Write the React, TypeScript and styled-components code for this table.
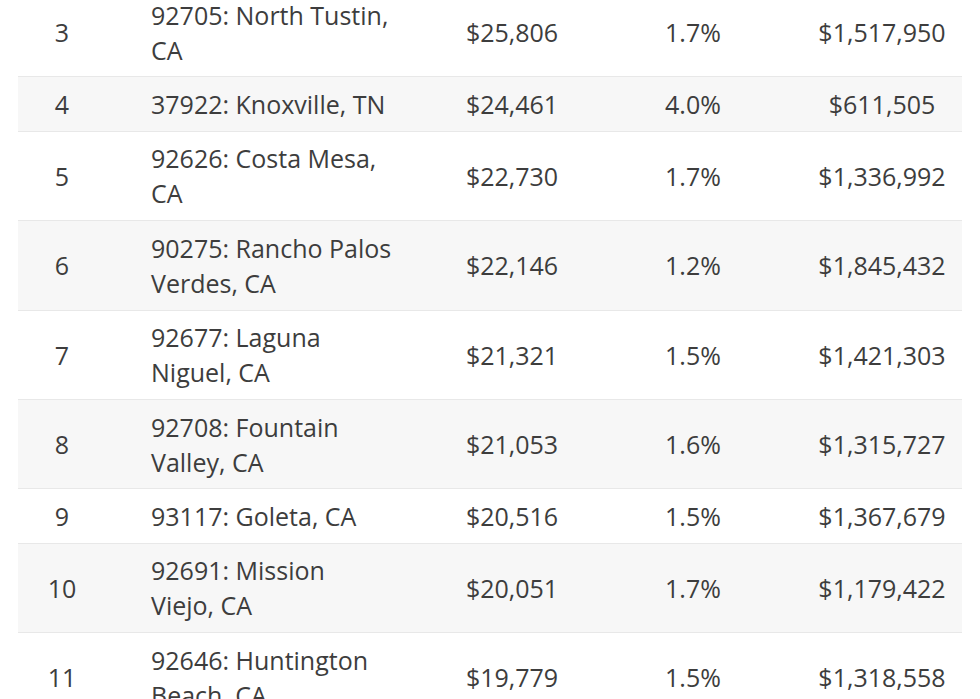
import React from "react";
import styled, { createGlobalStyle } from "styled-components";

const GlobalStyle = createGlobalStyle`
  html, body {
    margin: 0;
    padding: 0;
    background: #ffffff;
  }
  body {
    font-family: "Open Sans", "Noto Sans", sans-serif;
    color: #3d3d3d;
    overflow: hidden;
  }
`;

const Viewport = styled.div`
  width: 980px;
  height: 699px;
  overflow: hidden;
  padding: 0 18px;
  box-sizing: border-box;
`;

const Table = styled.div`
  margin-top: -12px;
  display: grid;
  grid-template-columns: 88px 334px 144px 218px 160px;
  font-size: 25px;
  line-height: 35px;
`;

const Row = styled.div<{ $striped: boolean }>`
  display: contents;
  & > div {
    background: ${(p) => (p.$striped ? "#f7f7f7" : "#ffffff")};
  }
`;

const Cell = styled.div<{ $align?: "left" | "center" }>`
  display: flex;
  flex-direction: column;
  justify-content: center;
  align-items: ${(p) => (p.$align === "left" ? "flex-start" : "center")};
  padding: ${(p) => (p.$align === "left" ? "9.6px 44px 8.8px 45px" : "9.6px 0 8.8px")};
  border-bottom: 1px solid #e8e8e8;
  white-space: nowrap;
`;

const Line = styled.span`
  display: block;
`;

type Item = {
  rank: number;
  place: string[];
  income: string;
  rate: string;
  value: string;
};

const rows: Item[] = [
  { rank: 3, place: ["92705: North Tustin,", "CA"], income: "$25,806", rate: "1.7%", value: "$1,517,950" },
  { rank: 4, place: ["37922: Knoxville, TN"], income: "$24,461", rate: "4.0%", value: "$611,505" },
  { rank: 5, place: ["92626: Costa Mesa,", "CA"], income: "$22,730", rate: "1.7%", value: "$1,336,992" },
  { rank: 6, place: ["90275: Rancho Palos", "Verdes, CA"], income: "$22,146", rate: "1.2%", value: "$1,845,432" },
  { rank: 7, place: ["92677: Laguna", "Niguel, CA"], income: "$21,321", rate: "1.5%", value: "$1,421,303" },
  { rank: 8, place: ["92708: Fountain", "Valley, CA"], income: "$21,053", rate: "1.6%", value: "$1,315,727" },
  { rank: 9, place: ["93117: Goleta, CA"], income: "$20,516", rate: "1.5%", value: "$1,367,679" },
  { rank: 10, place: ["92691: Mission", "Viejo, CA"], income: "$20,051", rate: "1.7%", value: "$1,179,422" },
  { rank: 11, place: ["92646: Huntington", "Beach, CA"], income: "$19,779", rate: "1.5%", value: "$1,318,558" },
];

export default function App() {
  return (
    <>
      <GlobalStyle />
      <Viewport>
        <Table>
          {rows.map((r) => (
            <Row key={r.rank} $striped={r.rank % 2 === 0}>
              <Cell>{r.rank}</Cell>
              <Cell $align="left">
                {r.place.map((l) => (
                  <Line key={l}>{l}</Line>
                ))}
              </Cell>
              <Cell>{r.income}</Cell>
              <Cell>{r.rate}</Cell>
              <Cell>{r.value}</Cell>
            </Row>
          ))}
        </Table>
      </Viewport>
    </>
  );
}
